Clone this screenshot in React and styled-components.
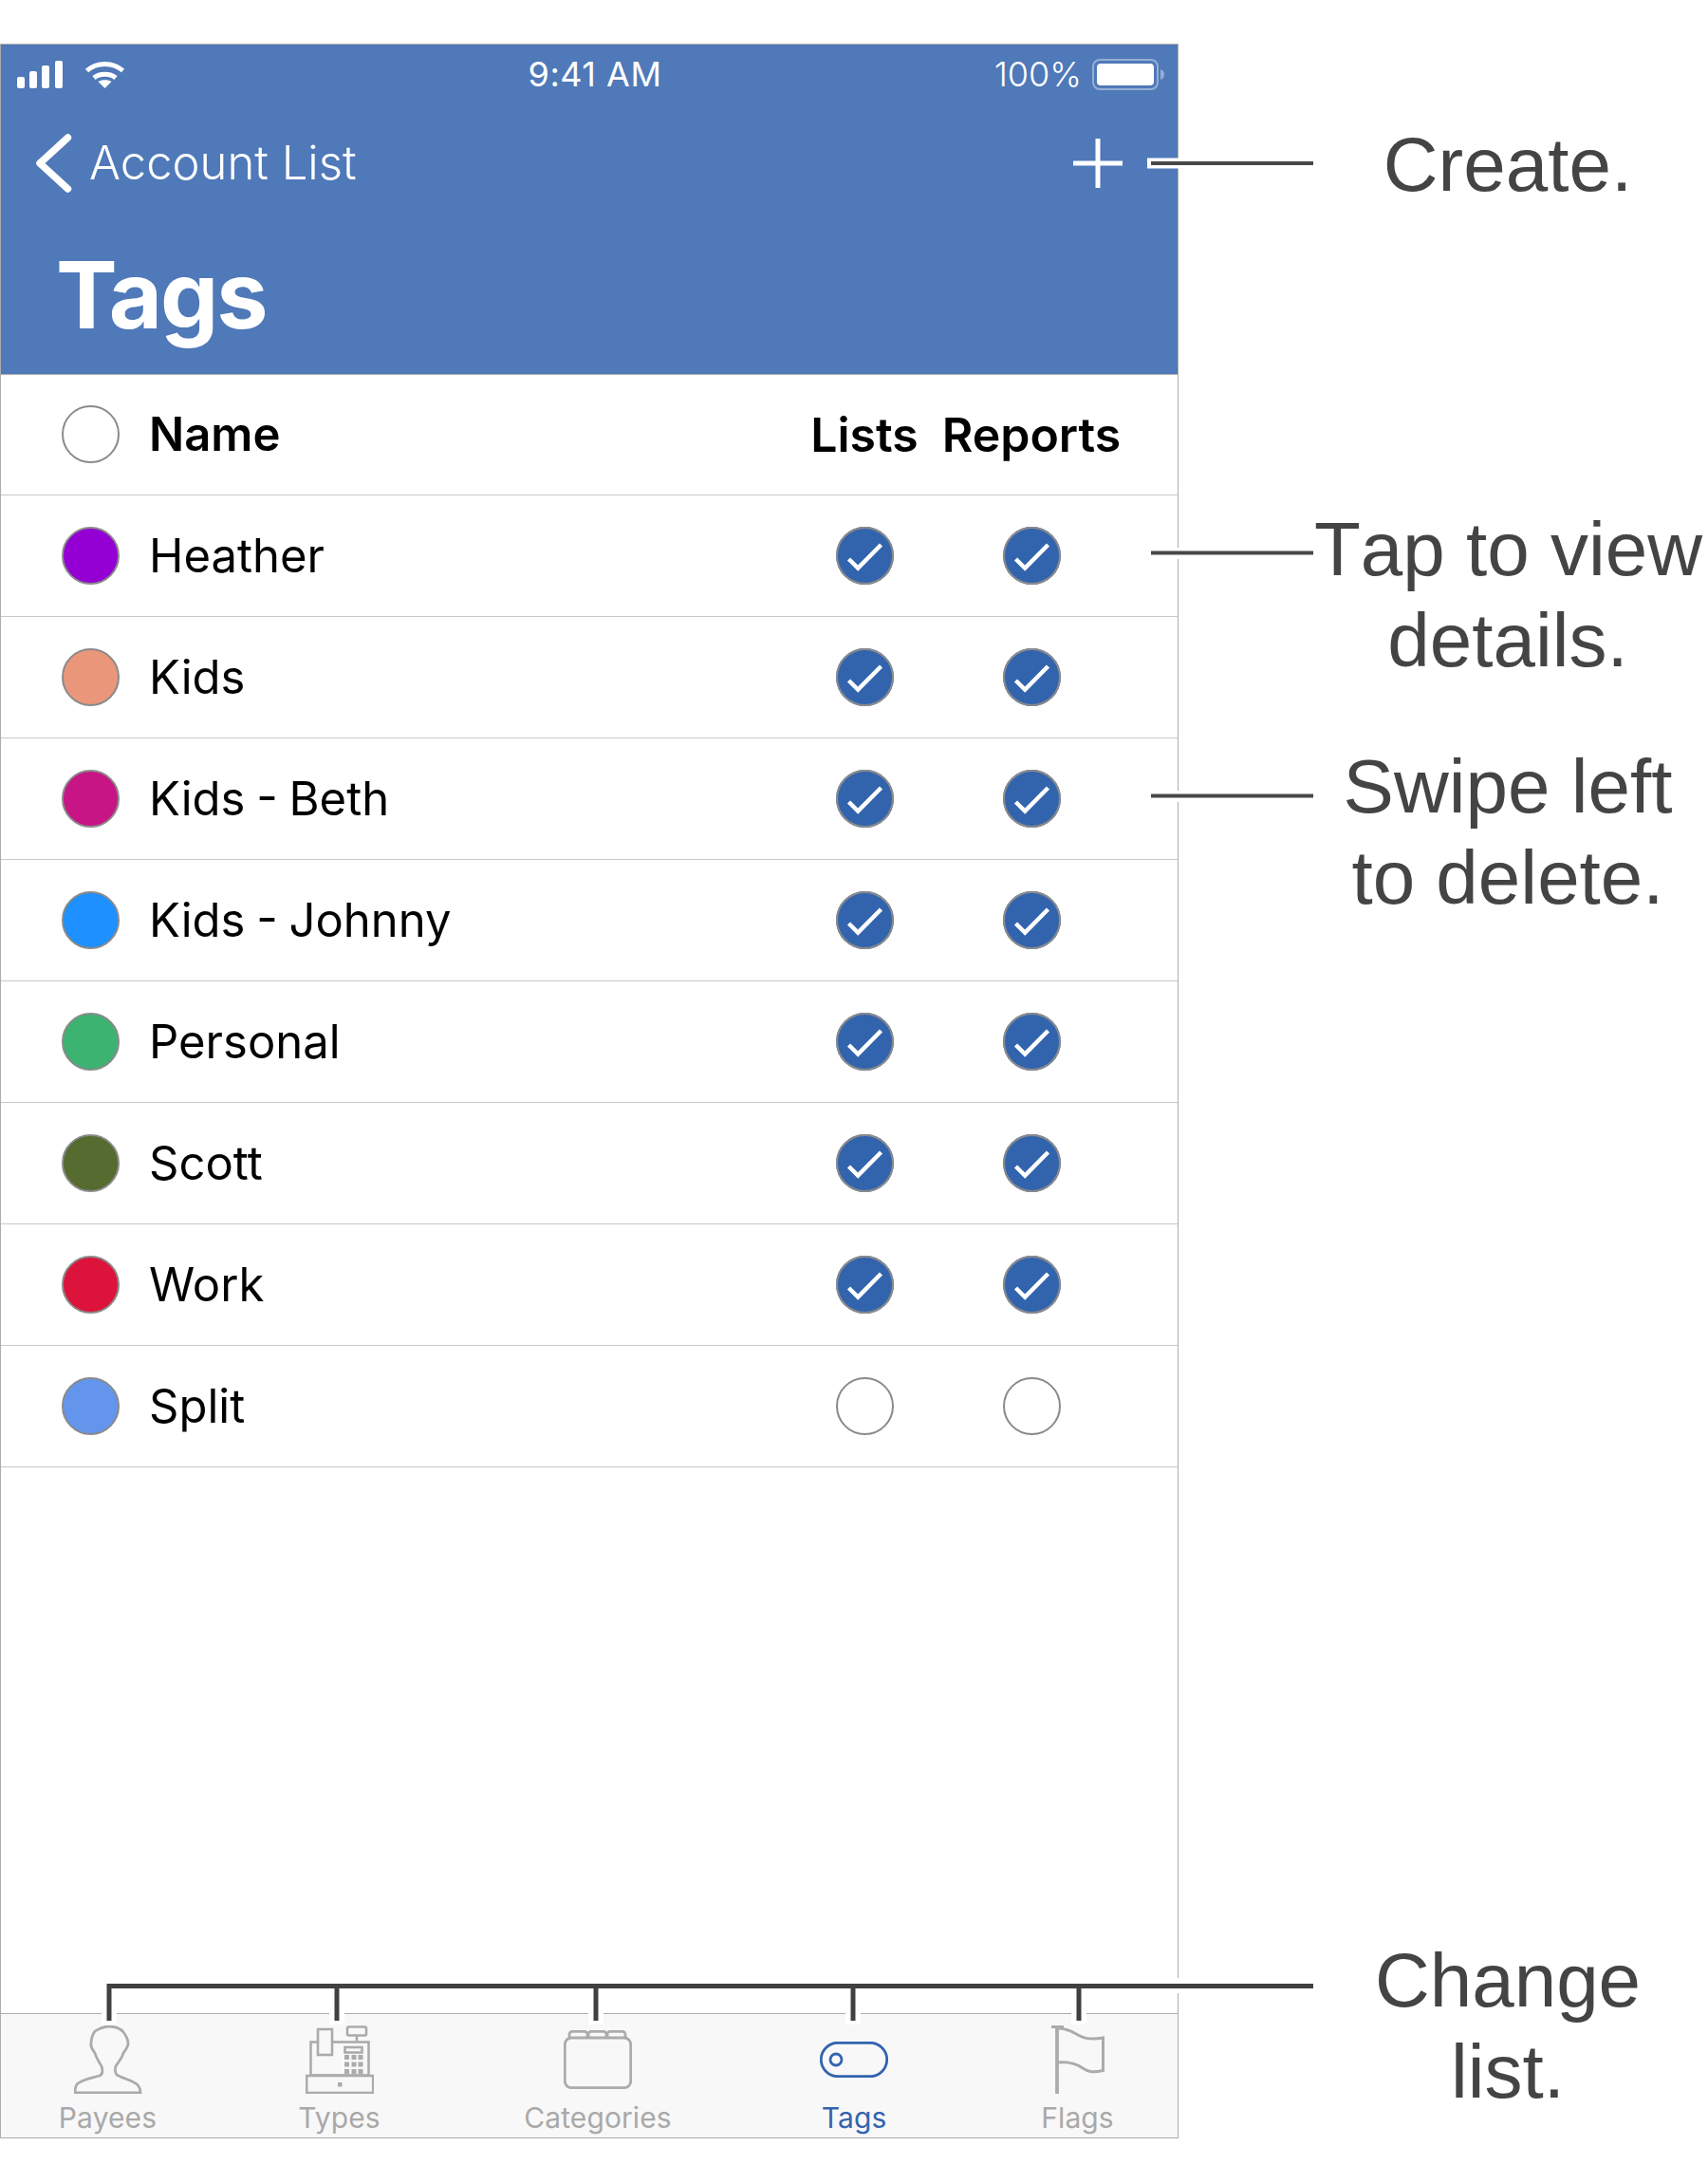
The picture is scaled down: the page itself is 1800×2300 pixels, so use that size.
import styled, { createGlobalStyle } from "styled-components";

const TAGS = [
  { name: "Heather", color: "#9400d3", on: true },
  { name: "Kids", color: "#e9967a", on: true },
  { name: "Kids - Beth", color: "#c71585", on: true },
  { name: "Kids - Johnny", color: "#1e90ff", on: true },
  { name: "Personal", color: "#3cb371", on: true },
  { name: "Scott", color: "#556b2f", on: true },
  { name: "Work", color: "#dc143c", on: true },
  { name: "Split", color: "#6495ed", on: false },
];

const CALLOUTS = [
  { top: 80, lines: ["Create."] },
  { top: 309, lines: ["Tap to view", "details."] },
  { top: 58, lines: ["Swipe left", "to delete."] },
  { top: 1066, lines: ["Change", "list."] },
];

const GRAY = "#ababab";
const BLUE = "#3264ae";

function CheckMark({ on }) {
  return (
    <Check $on={on}>
      {on && (
        <svg width="61" height="61" viewBox="-30.5 -30.5 61 61">
          <path d="M-17 3.5 L-7.3 13 L17 -11.5" fill="none" stroke="#fff" strokeWidth="4.5" />
        </svg>
      )}
    </Check>
  );
}

function SignalIcon() {
  return (
    <svg width="48" height="29" viewBox="0 0 48 29" fill="#fff">
      <rect x="0" y="17" width="8" height="12" rx="2" />
      <rect x="13" y="11" width="8" height="18" rx="2" />
      <rect x="26" y="5" width="8" height="24" rx="2" />
      <rect x="40" y="0" width="8" height="29" rx="2" />
    </svg>
  );
}

function WifiIcon() {
  return (
    <svg width="43" height="29" viewBox="0 0 43 29" fill="none" stroke="#fff" strokeWidth="5">
      <path d="M2.5 10.5 C13 1 30 1 40.5 10.5" />
      <path d="M10 18 C16 13 27 13 33 18" />
      <path d="M21.5 29 L14.5 22 C18 19.5 25 19.5 28.5 22 Z" fill="#fff" stroke="none" />
    </svg>
  );
}

function BatteryIcon() {
  return (
    <svg width="77" height="33" viewBox="0 0 77 33">
      <rect x="1" y="1" width="68" height="31" rx="7" fill="none" stroke="#fff" strokeOpacity="0.4" strokeWidth="2" />
      <rect x="5" y="5" width="60" height="23" rx="4" fill="#fff" />
      <path d="M72 11 C75 12 76 14 76 16.5 C76 19 75 21 72 22 Z" fill="#fff" fillOpacity="0.4" />
    </svg>
  );
}

function PayeesIcon() {
  return (
    <svg width="72" height="72" viewBox="0 0 72 72" fill="none" stroke={GRAY} strokeWidth="2.8">
      <path d="M1 71 C1 65 2 61 6 60 C10 57 20 55 27 53 C31 51 30 46 29 43 C26 38 23 33 22 29 C20 26 17 23 18 19 C18 14 20 9 22 6 C26 4 30 1 37 1 C44 1 50 4 52 7 C55 11 57 15 57 19 C57 23 54 26 52 29 C51 34 47 38 44 43 C43 47 43 50 45 52 C50 55 58 57 63 60 C68 62 70 65 70 71 Z" />
    </svg>
  );
}

function TypesIcon() {
  return (
    <svg width="72" height="72" viewBox="0 0 72 72" fill="none" stroke={GRAY} strokeWidth="2.6">
      <rect x="5.5" y="17.5" width="61" height="35" />
      <rect x="13" y="4" width="15" height="27" fill="#f8f8f8" />
      <rect x="44" y="1.5" width="20" height="9" rx="1.5" />
      <path d="M54 10.5 V17.5" />
      <rect x="41.5" y="23" width="18" height="5.5" />
      <g fill={GRAY} stroke="none">
        <rect x="41" y="31" width="5" height="5" />
        <rect x="48.5" y="31" width="5" height="5" />
        <rect x="55.5" y="31" width="5" height="5" />
        <rect x="41" y="38.5" width="5" height="5" />
        <rect x="48.5" y="38.5" width="5" height="5" />
        <rect x="55.5" y="38.5" width="5" height="5" />
        <rect x="41" y="46" width="5" height="5" />
        <rect x="48.5" y="46" width="5" height="5" />
        <rect x="55.5" y="46" width="5" height="5" />
        <rect x="34" y="60" width="4.5" height="4.5" />
      </g>
      <rect x="1.2" y="53" width="70" height="18" />
    </svg>
  );
}

function CategoriesIcon() {
  return (
    <svg width="72" height="62" viewBox="0 0 72 62" fill="none" stroke={GRAY} strokeWidth="2.8">
      <rect x="6" y="1.3" width="19" height="8" rx="3" />
      <rect x="26" y="1.3" width="19" height="8" rx="3" />
      <rect x="46" y="1.3" width="19" height="8" rx="3" />
      <rect x="1.3" y="8" width="69.4" height="52.7" rx="7" fill="#f8f8f8" />
    </svg>
  );
}

function TagsIcon() {
  return (
    <svg width="72" height="38" viewBox="0 0 72 38" fill="none" stroke={BLUE} strokeWidth="2.8">
      <rect x="1.3" y="1.3" width="69.4" height="35.4" rx="17.7" />
      <circle cx="17" cy="19" r="6" />
    </svg>
  );
}

function FlagsIcon() {
  return (
    <svg width="56" height="72" viewBox="0 0 56 72" fill="none" stroke={GRAY} strokeWidth="3">
      <path d="M6 0 V72 M0 1 H13" strokeWidth="3.8" />
      <path d="M7 3 C18 3 24 8 30 11 C36 14 44 15 54.5 13 V47.5 C44 50 39 49 33 45 C26 40 18 38 7 39" />
    </svg>
  );
}

const TABS = [
  { label: "Payees", icon: <PayeesIcon />, width: "225px" },
  { label: "Types", icon: <TypesIcon />, width: "263px" },
  { label: "Categories", icon: <CategoriesIcon />, width: "282px" },
  { label: "Tags", icon: <TagsIcon />, width: "258px", active: true },
  { label: "Flags", icon: <FlagsIcon />, width: "213px" },
];

const DROPS = [115, 355, 628, 899, 1137];

// leader lines from the notes into the screen
function Leaders() {
  return (
    <LeaderLayer width="1800" height="2300" viewBox="0 0 1800 2300" fill="none">
      <path d="M1209 172 H1242" stroke="#fff" strokeWidth="11" />
      <path d="M1241.5 577 V589 M1241.5 833 V845 M1241.5 2084 V2100" stroke="#fff" strokeWidth="3" />
      {DROPS.map((x) => (
        <path key={x} d={`M${x} 2110 V2133`} stroke="#fff" strokeWidth="16" />
      ))}
      <path d="M1213 172 H1384 M1213 582.5 H1384 M1213 838.5 H1384" stroke="#484848" strokeWidth="4" />
      <path d="M115 2129 V2092.5 H1384" stroke="#404040" strokeWidth="5" />
      {DROPS.slice(1).map((x) => (
        <path key={x} d={`M${x} 2092 V2129`} stroke="#404040" strokeWidth="5" />
      ))}
    </LeaderLayer>
  );
}

export default function App() {
  return (
    <Page>
      <GlobalStyle />
      <Phone>
        <Header>
          <StatusBar>
            <StatusLeft>
              <SignalIcon />
              <WifiIcon />
            </StatusLeft>
            <Time>9:41 AM</Time>
            <StatusRight>
              <span>100%</span>
              <BatteryIcon />
            </StatusRight>
          </StatusBar>
          <NavBar>
            <Back>
              <svg width="38" height="62" viewBox="0 0 38 62" fill="none" stroke="#fff" strokeWidth="7.5" strokeLinecap="round" strokeLinejoin="round">
                <path d="M33.5 4 L4 31 L33.5 58" />
              </svg>
              <span>Account List</span>
            </Back>
            <svg width="52" height="52" viewBox="0 0 52 52" stroke="#fff" strokeWidth="5">
              <path d="M26 0 V52 M0 26 H52" />
            </svg>
          </NavBar>
          <Title>Tags</Title>
        </Header>
        <Row>
          <Dot $color="#fff" />
          <ColumnName>Name</ColumnName>
          <ColumnLabel>Lists</ColumnLabel>
          <ColumnLabel>Reports</ColumnLabel>
        </Row>
        {TAGS.map((tag) => (
          <Row key={tag.name}>
            <Dot $color={tag.color} />
            <Name>{tag.name}</Name>
            <Slot>
              <CheckMark on={tag.on} />
            </Slot>
            <Slot>
              <CheckMark on={tag.on} />
            </Slot>
          </Row>
        ))}
        <Spacer />
        <TabBar>
          {TABS.map((tab) => (
            <Tab key={tab.label} $width={tab.width}>
              <TabIcon>{tab.icon}</TabIcon>
              <TabLabel $active={tab.active}>{tab.label}</TabLabel>
            </Tab>
          ))}
        </TabBar>
      </Phone>
      <Notes>
        {CALLOUTS.map((note) => (
          <Note key={note.lines[0]} $top={note.top}>
            {note.lines.map((line) => (
              <div key={line}>{line}</div>
            ))}
          </Note>
        ))}
      </Notes>
      <Leaders />
    </Page>
  );
}

const GlobalStyle = createGlobalStyle`
  body {
    margin: 0;
    background: #fff;
    font-family: Inter, "Liberation Sans", sans-serif;
  }
`;

const Page = styled.div`
  position: relative;
  display: flex;
  align-items: flex-start;
  width: 1800px;
  height: 2300px;
  padding-top: 46px;
  box-sizing: border-box;
  overflow: hidden;
`;

const Phone = styled.div`
  display: flex;
  flex-direction: column;
  flex: none;
  width: 1242px;
  height: 2207px;
  box-sizing: border-box;
  border: 1px solid #adadad;
`;

const Header = styled.div`
  display: flex;
  flex-direction: column;
  height: 346.5px;
  background: #4f79b8;
  border-bottom: 1px solid #adadad;
  box-sizing: content-box;
  color: #fff;
`;

const StatusBar = styled.div`
  position: relative;
  display: flex;
  align-items: center;
  justify-content: space-between;
  height: 62px;
  padding: 0 13px 0 17px;
`;

const StatusLeft = styled.div`
  display: flex;
  align-items: center;
  gap: 23px;
`;

const Time = styled.div`
  position: absolute;
  left: 0;
  right: 0;
  text-align: center;
  font-size: 36px;
  letter-spacing: 0.5px;
  padding-left: 12px;
`;

const StatusRight = styled.div`
  display: flex;
  align-items: center;
  gap: 11px;
  font-size: 36px;
  font-weight: 300;
`;

const NavBar = styled.div`
  display: flex;
  align-items: center;
  justify-content: space-between;
  height: 116px;
  padding: 9px 58px 0 37px;
  box-sizing: border-box;
`;

const Back = styled.div`
  display: flex;
  align-items: center;
  gap: 18px;
  font-size: 49px;
  font-weight: 300;
`;

const Title = styled.h1`
  margin: 31px 0 0 58px;
  font-size: 97px;
  font-weight: 700;
  line-height: 110px;
  letter-spacing: -2px;
`;

const Row = styled.div`
  display: flex;
  align-items: center;
  flex: none;
  height: 127.9px;
  padding: 0 66px 0 64px;
  box-sizing: border-box;
  border-bottom: 1px solid #c8c7cc;
`;

const Dot = styled.div`
  flex: none;
  width: 61px;
  height: 61px;
  box-sizing: border-box;
  border-radius: 50%;
  border: 2px solid #8a8a8a;
  background: ${({ $color }) => $color};
`;

const Name = styled.div`
  flex: 1;
  margin-left: 31px;
  font-size: 49px;
  word-spacing: -2px;
  color: #000;
`;

const ColumnName = styled(Name)`
  font-weight: 600;
`;

const ColumnLabel = styled.div`
  display: flex;
  justify-content: center;
  flex: none;
  width: 176px;
  font-size: 50px;
  font-weight: 600;
  color: #000;
  white-space: nowrap;
`;

const Slot = styled.div`
  display: flex;
  justify-content: center;
  flex: none;
  width: 176px;
`;

const Check = styled.div`
  width: 61px;
  height: 61px;
  box-sizing: border-box;
  border-radius: 50%;
  border: ${({ $on }) => ($on ? "0" : "2px solid #8a8a8a")};
  background: ${({ $on }) => ($on ? BLUE : "#fff")};
  box-shadow: ${({ $on }) => ($on ? "inset 0 0 0 2px #8a8a8a" : "none")};

  svg {
    display: block;
  }
`;

const Spacer = styled.div`
  flex: 1;
`;

const TabBar = styled.div`
  display: flex;
  flex: none;
  height: 131px;
  background: #f8f8f8;
  border-top: 1px solid #adadad;
  box-sizing: border-box;
`;

const Tab = styled.div`
  display: flex;
  flex-direction: column;
  align-items: center;
  flex: none;
  width: ${({ $width }) => $width};
  margin-top: 12px;
`;

const TabIcon = styled.div`
  display: flex;
  align-items: center;
  justify-content: center;
  height: 72px;

  svg {
    display: block;
  }
`;

const TabLabel = styled.div`
  margin-top: 7px;
  font-size: 30px;
  letter-spacing: 0.1px;
  line-height: 36px;
  color: ${({ $active }) => ($active ? BLUE : "#a9a9a9")};
`;

const Notes = styled.div`
  display: flex;
  flex-direction: column;
  flex: none;
  width: 408px;
  margin-left: 143px;
  font-family: "Liberation Sans", Arial, sans-serif;
  font-kerning: none;
`;

const Note = styled.div`
  margin-top: ${({ $top }) => $top}px;
  font-size: 80px;
  line-height: 96px;
  text-align: center;
  color: #444;
  white-space: nowrap;
`;

const LeaderLayer = styled.svg`
  position: absolute;
  top: 0;
  left: 0;
  pointer-events: none;
`;
